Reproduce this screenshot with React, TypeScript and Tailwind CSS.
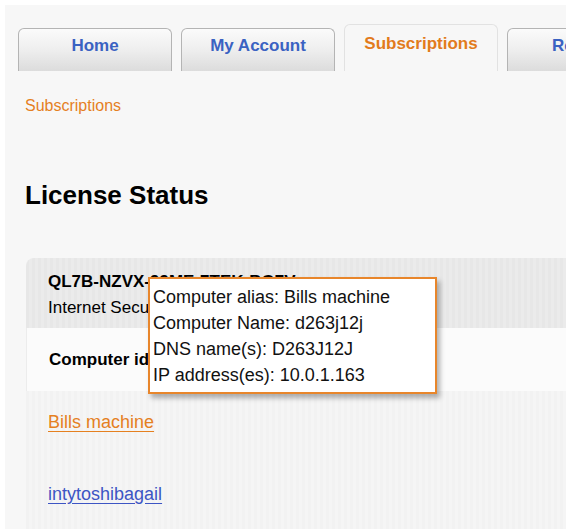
import React from "react";

const tabs = [
  { label: "Home", active: false },
  { label: "My Account", active: false },
  { label: "Subscriptions", active: true },
  { label: "Reports", active: false },
];

function Tab({ label, active }: { label: string; active: boolean }) {
  if (active) {
    return (
      <div className="shrink-0 w-[154px] h-[47px] rounded-t-[6px] border border-b-0 border-[#e2e2e2] bg-[#f7f7f7] flex justify-center pt-[9px]">
        <span className="text-[17px] font-bold leading-[20px] text-[#e27b1c]">{label}</span>
      </div>
    );
  }
  return (
    <div className="shrink-0 w-[154px] h-[43px] rounded-t-[6px] border border-b-0 border-[#b4b4b4] bg-gradient-to-b from-[#fbfbfb] via-[#eeeeee] to-[#dcdcdc] flex justify-center pt-[7px]">
      <span className="text-[17px] font-bold leading-[20px] text-[#3a62c2]">{label}</span>
    </div>
  );
}

export default function App() {
  return (
    <div className="w-[566px] h-[529px] overflow-hidden bg-white pt-[5px] pl-[5px] font-['Liberation_Sans',Arial,sans-serif]">
      <div className="h-full bg-[#f7f7f7]">
        {/* tab strip */}
        <div className="flex items-end gap-[9px] pl-[13px] pt-[19px]">
          {tabs.map((t) => (
            <Tab key={t.label} label={t.label} active={t.active} />
          ))}
        </div>

        {/* breadcrumb */}
        <div className="mt-[25px] pl-[20px] text-[16px] leading-[20px] text-[#e5801f]">Subscriptions</div>

        <h1 className="mt-[63px] pl-[20px] text-[26px] font-bold leading-[32px] text-black">License Status</h1>

        {/* license panel */}
        <div className="relative mt-[47px] ml-[21px]">
          <div className="h-[70px] rounded-tl-[8px] pl-[22px] pt-[11px] bg-[repeating-linear-gradient(90deg,#e7e7e7_0px,#e7e7e7_3px,#ebebeb_3px,#ebebeb_6px)] text-[17px] leading-[26px] text-black">
            <div className="font-bold whitespace-nowrap">QL7B-NZVX-99ME-7TEK-BG7V</div>
            <div className="whitespace-nowrap">Internet Security</div>
          </div>
          <div className="h-[63px] flex items-center pl-[22px] bg-[#fbfbfb] border-l border-[#ececec]">
            <span className="text-[17px] font-bold text-black whitespace-nowrap">Computer identification</span>
          </div>
          <div className="h-[200px] pl-[22px] pt-[19px] bg-[repeating-linear-gradient(90deg,#f2f2f2_0px,#f2f2f2_3px,#f5f5f5_3px,#f5f5f5_6px)] text-[18px] leading-[24px]">
            <div>
              <a className="text-[#e5801f] underline underline-offset-[3px]" href="#">
                Bills machine
              </a>
            </div>
            <div className="mt-[48px]">
              <a className="text-[#3d55c4] underline underline-offset-[3px]" href="#">
                intytoshibagail
              </a>
            </div>
          </div>

          {/* hover card */}
          <div className="absolute left-[122px] top-[19px] w-[289px] h-[117px] border-2 border-[#e8862b] bg-white pl-[3px] pt-[5px] shadow-[3px_4px_5px_rgba(0,0,0,0.3)] text-[18px] leading-[26px] text-[#111]">
            <div className="whitespace-nowrap">Computer alias: Bills machine</div>
            <div className="whitespace-nowrap">Computer Name: d263j12j</div>
            <div className="whitespace-nowrap">DNS name(s): D263J12J</div>
            <div className="whitespace-nowrap">IP address(es): 10.0.1.163</div>
          </div>
        </div>
      </div>
    </div>
  );
}
